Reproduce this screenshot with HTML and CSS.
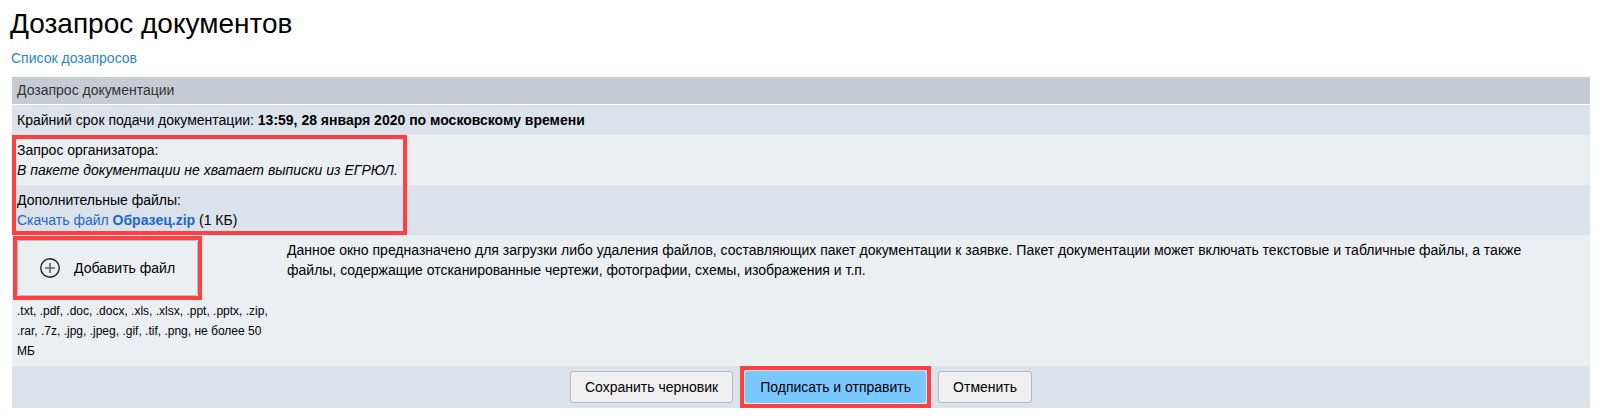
FILE: index.html
```
<!DOCTYPE html>
<html lang="ru">
<head>
<meta charset="utf-8">
<title>Дозапрос документов</title>
<link rel="stylesheet" href="styles.css">
</head>
<body>
<main class="page">
  <h1 class="title">Дозапрос документов</h1>
  <a class="back-link" href="#">Список дозапросов</a>
  <form class="panel">
    <h2 class="panel-header">Дозапрос документации</h2>
    <div class="row row-dark">Крайний срок подачи документации: <b>13:59, 28 января 2020 по московскому времени</b></div>
    <div class="request">
      <div class="row row-light">
        <div>Запрос организатора:</div>
        <em>В пакете документации не хватает выписки из ЕГРЮЛ.</em>
      </div>
      <div class="row row-dark">
        <div>Дополнительные файлы:</div>
        <a class="file-link" href="#">Скачать файл <b>Образец.zip</b></a> (1 КБ)
      </div>
      <div class="mark mark-request"></div>
    </div>
    <div class="row row-light upload">
      <div class="upload-side">
        <div class="marked">
          <button class="add-button" type="button">
            <svg class="add-icon" viewBox="0 0 20 20" width="20" height="20" aria-hidden="true">
              <circle cx="10" cy="10" r="9.2" fill="none" stroke="#222" stroke-width="1.4"/>
              <path d="M10 5v10M5 10h10" stroke="#666" stroke-width="1.7"/>
            </svg>
            Добавить файл
          </button>
          <div class="mark mark-add"></div>
        </div>
        <div class="formats">.txt, .pdf, .doc, .docx, .xls, .xlsx, .ppt, .pptx, .zip, .rar, .7z, .jpg, .jpeg, .gif, .tif, .png, не более 50 МБ</div>
      </div>
      <p class="description">Данное окно предназначено для загрузки либо удаления файлов, составляющих пакет документации к заявке. Пакет документации может включать текстовые и табличные файлы, а также файлы, содержащие отсканированные чертежи, фотографии, схемы, изображения и т.п.</p>
    </div>
    <div class="row row-dark actions">
      <button class="button" type="button">Сохранить черновик</button>
      <div class="marked">
        <button class="button button-primary" type="submit">Подписать и отправить</button>
        <div class="mark mark-submit"></div>
      </div>
      <button class="button" type="button">Отменить</button>
    </div>
  </form>
</main>
</body>
</html>
```
FILE: styles.css
```
* {
  box-sizing: border-box;
}

body {
  margin: 0;
  background: #fff;
  color: #000;
  font: 14px/20px "Liberation Sans", Arial, sans-serif;
}

.page {
  padding: 8px 11px 8px 10px;
}

.title {
  margin: 0 0 8px;
  font-size: 28px;
  font-weight: 400;
  line-height: 32px;
}

.back-link {
  display: block;
  width: fit-content;
  padding-left: 1px;
  color: #2a86c8;
  text-decoration: none;
}

.panel {
  margin-top: 9px;
  margin-left: 2px;
}

.panel-header {
  margin: 0 0 1px;
  padding: 3px 5px 4px;
  background: #c7cbd3;
  color: #333;
  font-size: 14px;
  font-weight: 400;
  line-height: 20px;
}

.row {
  padding: 5px;
}

.row-dark {
  background: #dce2ea;
}

.row-light {
  background: #ebeff2;
}

.request,
.marked {
  position: relative;
}

.marked {
  width: fit-content;
}

.mark {
  position: absolute;
  border: 4px solid #ff4040;
  pointer-events: none;
}

.mark-request {
  top: 0;
  bottom: 0;
  left: 0;
  width: 395px;
}

.mark-add {
  inset: -4px;
}

.mark-submit {
  inset: -5px;
}

.file-link {
  color: #1a66d0;
  text-decoration: none;
}

.upload {
  display: flex;
  gap: 14px;
}

.upload-side {
  flex: 0 0 256px;
}

.add-button {
  display: flex;
  align-items: center;
  gap: 14px;
  height: 56px;
  padding: 0 22px;
  border: 1px solid #b9bec4;
  border-radius: 3px;
  background: #ebeff2;
  color: #000;
  font: inherit;
}

.formats {
  margin-top: 5px;
  font-size: 12px;
}

.description {
  flex: 1;
  margin: 0;
  padding-right: 32px;
}

.actions {
  display: flex;
  justify-content: center;
  gap: 12px;
}

.button {
  display: block;
  height: 32px;
  padding: 0 14px;
  border: 1px solid #b9b9b9;
  border-radius: 3px;
  background: #efefef;
  color: #000;
  font: inherit;
}

.button-primary {
  border-color: #8cc4ec;
  background: #79c8ff;
}
```
